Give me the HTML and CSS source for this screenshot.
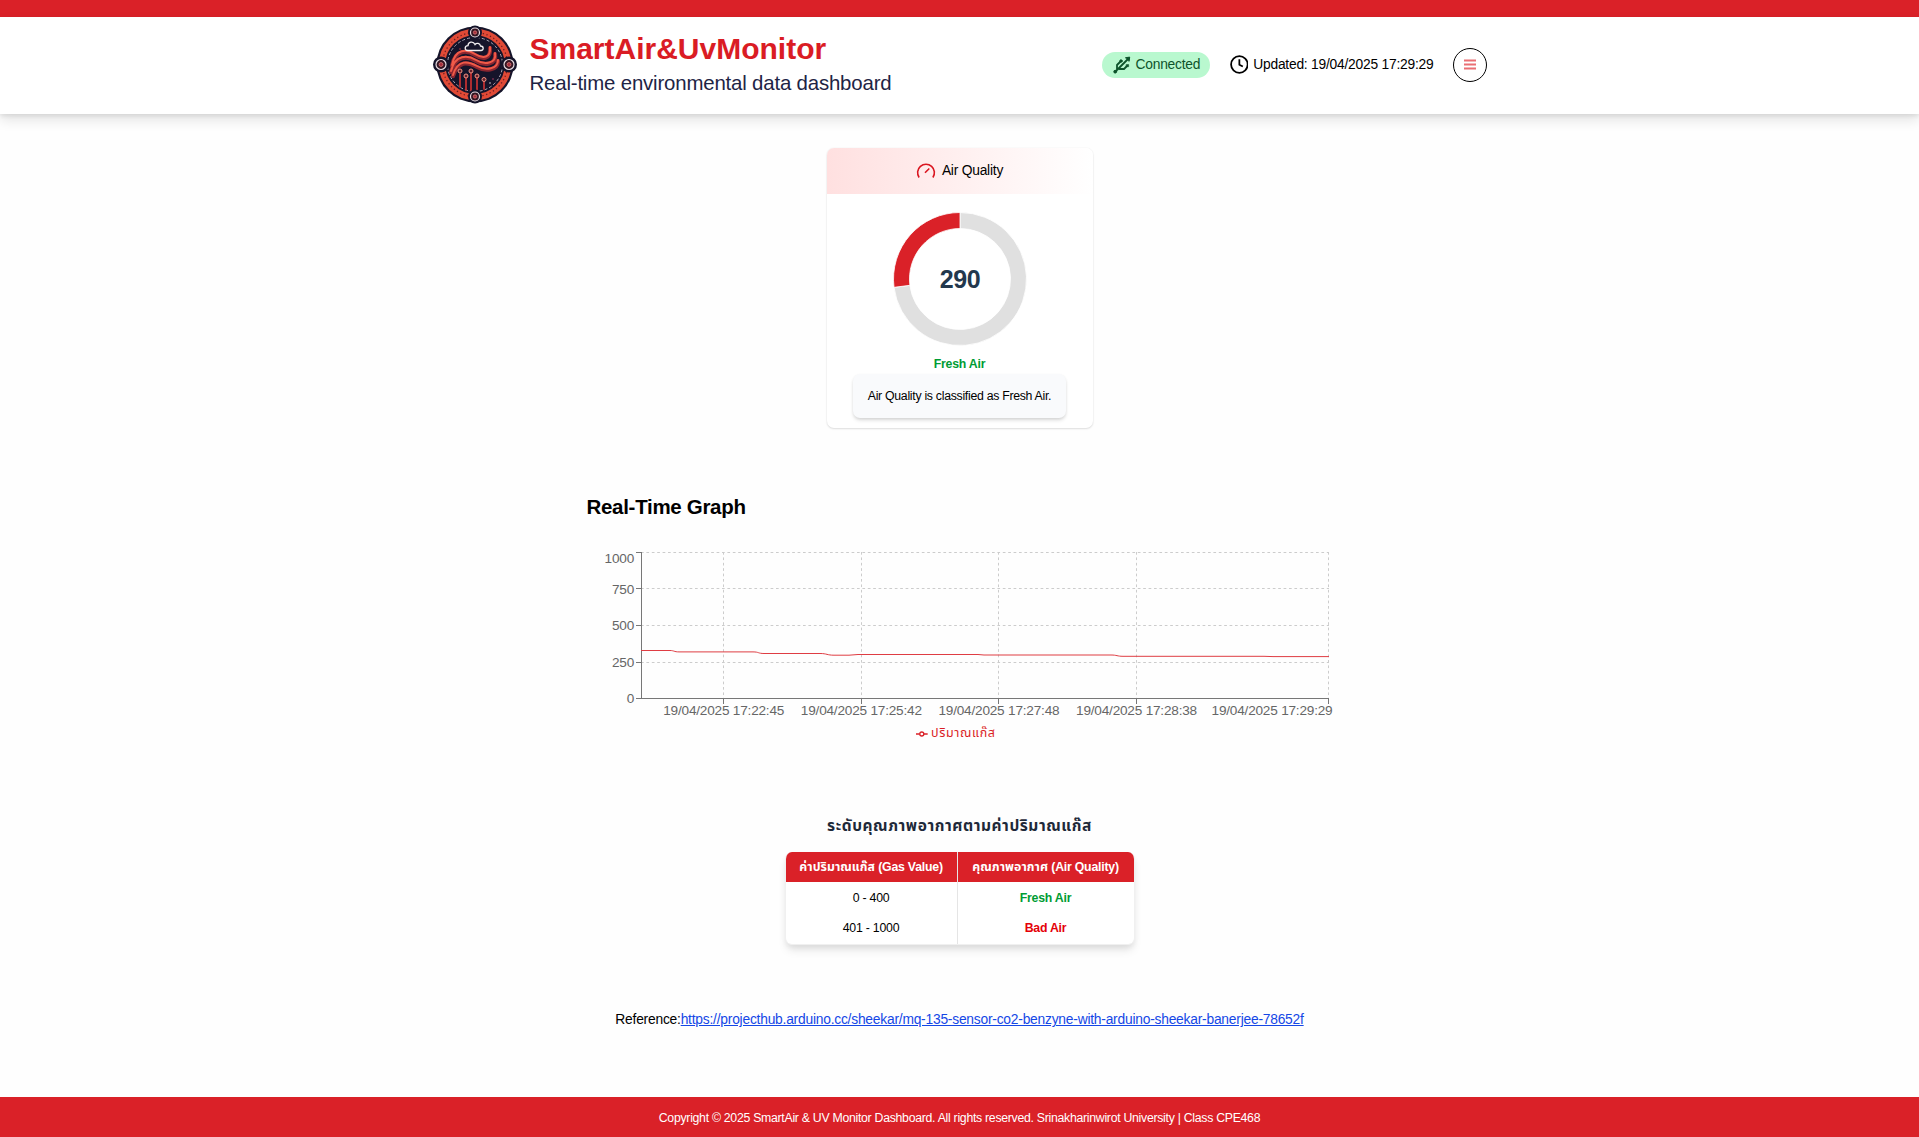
FILE: index.html
```html
<!DOCTYPE html>
<html lang="en">
<head>
<meta charset="utf-8">
<title>SmartAir&amp;UvMonitor</title>
<link rel="stylesheet" href="styles.css">
</head>
<body>
<div class="topbar"></div>
<header class="header">
  <div class="header-inner">
    <svg class="logo" width="84" height="80" viewBox="0 0 84 80">
      <ellipse cx="42" cy="39.500" rx="38.500" ry="38" fill="#15142a"/>
      <ellipse cx="42" cy="39.500" rx="33" ry="32.500" fill="none" stroke="#e04a36" stroke-width="6.400"/>
      <ellipse cx="42" cy="39.500" rx="32.500" ry="32" fill="none" stroke="#6d1d22" stroke-width="1.300" stroke-dasharray="1.300 2.500"/>
      <ellipse cx="42" cy="39.500" rx="27.500" ry="27" fill="#15142a" stroke="#a9a6b4" stroke-width="1" stroke-dasharray="3 2"/>
      <g fill="none" stroke-linecap="round">
        <path d="M19 41C22 24 34 25 42 30S58 34 57 23M18 47C22 30 35 31 43 36S64 40 62 29M20 51C25 35 35 37 44 42S65 45 65 36" stroke="#8c2630" stroke-width="4.200"/>
        <path d="M19 40C22 23 34 24 42 29S58 33 57 22M18 46C22 29 35 30 43 35S64 39 62 28M20 50C25 34 35 36 44 41S65 44 65 35" stroke="#f05a48" stroke-width="2"/>
        <path d="M27 49v13M33 53v12M38 48v18M44 53v13M51 57v7" stroke="#c83232" stroke-width="1.700"/>
      </g>
      <path d="M35 25.500h13c3 0 3-4.500-.5-4.500-.5-3-4-3.500-5.500-1.500-2-4-7-2.500-7 1.200-4 .3-3.500 4.800 0 4.800z" fill="#15142a" stroke="#f1eef0" stroke-width="1.300"/>
      <g fill="#611f2c" stroke="#f29483" stroke-width="1">
        <circle cx="27" cy="46" r="2"/><circle cx="33" cy="51" r="2"/><circle cx="38" cy="46" r="2"/><circle cx="44" cy="51" r="2"/><circle cx="51" cy="54.500" r="2"/>
      </g>
      <g fill="#15142a" stroke="#15142a" stroke-width="2">
        <circle cx="42" cy="7.500" r="6"/><circle cx="42" cy="71.500" r="6"/><circle cx="8" cy="39.500" r="7"/><circle cx="76" cy="39.500" r="7"/>
      </g>
      <g fill="#351421" stroke="#e5dde2" stroke-width="1.200">
        <circle cx="42" cy="7.500" r="4.500"/><circle cx="42" cy="71.500" r="4.500"/><circle cx="8" cy="39.500" r="5"/><circle cx="76" cy="39.500" r="5"/>
      </g>
      <g fill="#a52d3b" stroke="#f0908b" stroke-width=".6">
        <circle cx="42" cy="7.500" r="1.700"/><circle cx="42" cy="71.500" r="1.700"/><circle cx="8" cy="39.500" r="2"/><circle cx="76" cy="39.500" r="2"/>
      </g>
      <circle cx="60" cy="54" r=".8" fill="#b33b66"/><circle cx="57" cy="58" r=".7" fill="#fff"/><circle cx="27" cy="24" r=".8" fill="#b33b4a"/>
    </svg>
    <div class="brand">
      <h1>SmartAir&amp;UvMonitor</h1>
      <p>Real-time environmental data dashboard</p>
    </div>
    <div class="status">
      <span class="pill">
        <svg width="18" height="18" viewBox="0 0 18 18" fill="none" stroke="#0d542b" stroke-width="1.800" stroke-linecap="round" stroke-linejoin="round">
          <path d="M2 16 15.500 2.500M4 14V9L7.500 5.500M6.500 11.500v1.500h4.500l3-3"/>
          <path d="M12.800 1.700 16.700 1.100 16.200 5z" fill="#0d542b" stroke-width="1"/>
          <circle cx="2.200" cy="15.700" r="1.400" fill="#0d542b" stroke-width="1"/>
          <circle cx="8" cy="5" r="1.200" fill="#0d542b" stroke-width="1"/>
          <path d="M13.500 8.500h2.200v2.200h-2.200z" fill="#0d542b" stroke-width=".5"/>
        </svg>
        <span>Connected</span>
      </span>
      <span class="updated">
        <svg width="19" height="19" viewBox="0 0 19 19" fill="none" stroke="#000" stroke-width="1.800"><circle cx="9.500" cy="9.500" r="8.400"/><path d="M9.500 4.200v5.500l3.500 1.800"/></svg>
        <span>Updated: 19/04/2025 17:29:29</span>
      </span>
      <button class="menu" aria-label="Menu">
        <svg width="12" height="11" viewBox="0 0 12 11"><path d="M0 1.500h12M0 5.500h12M0 9.500h12" stroke="#ea6e73" stroke-width="2"/></svg>
      </button>
    </div>
  </div>
</header>

<main class="main">
  <section class="card">
    <div class="card-head">
      <svg width="20" height="18" viewBox="0 0 20 18" fill="none" stroke="#da1620" stroke-width="1.600"><path d="M3.100 15.500A8.400 8.400 0 1 1 16.900 15.500M9 10.700 13.300 6.500"/></svg>
      <span>Air Quality</span>
    </div>
    <svg class="ring" width="134" height="134" viewBox="-67 -67 134 134">
      <path d="M0-66.500A66.500 66.500 0 1 1-65.980 8.330L-50.100 6.330A50.500 50.500 0 1 0 0-50.500Z" fill="#e0e0e0" stroke="#fff" stroke-width=".8"/>
      <path d="M-65.980 8.330A66.500 66.500 0 0 1 0-66.500V-50.500A50.500 50.500 0 0 0-50.100 6.330Z" fill="#da2128" stroke="#fff" stroke-width=".8"/>
      <text class="ring-value" x="0" y="8.500" text-anchor="middle">290</text>
    </svg>
    <p class="quality fresh">Fresh Air</p>
    <p class="note">Air Quality is classified as Fresh Air.</p>
  </section>

  <section class="graph">
    <h2>Real-Time Graph</h2>
    <svg class="chart" width="746" height="204" viewBox="587 540 746 204">
      <g class="grid">
        <path d="M641 552.500H1329M641 588.500H1329M641 625.500H1329M641 662.500H1329M723.500 552V699M861.500 552V699M998.500 552V699M1136.500 552V699M1328.500 552V699"/>
      </g>
      <path class="axis" d="M641.500 552V699M641 698.500H1329M636 552.500H641M636 588.500H641M636 625.500H641M636 662.500H641M636 698.500H641M723.500 699V704M861.500 699V704M998.500 699V704M1136.500 699V704M1328.500 699V704"/>
      <path class="line" d="M641 650.500H670C674 650.500 674 651.900 679 651.900H753C759 651.900 758 653.500 764 653.500H820C827 653.500 827 655.200 834 655.200H849L858 654.500H978L984 655H1111C1117 655 1117 656.300 1123 656.300H1264L1273 656.600H1329"/>
      <g class="tick end">
        <text x="634" y="563">1000</text><text x="634" y="594">750</text><text x="634" y="630">500</text><text x="634" y="667">250</text><text x="634" y="703">0</text>
      </g>
      <g class="tick">
        <text x="723.700" y="715">19/04/2025 17:22:45</text><text x="861.300" y="715">19/04/2025 17:25:42</text><text x="998.900" y="715">19/04/2025 17:27:48</text><text x="1136.500" y="715">19/04/2025 17:28:38</text><text x="1272" y="715">19/04/2025 17:29:29</text>
      </g>
      <path class="key" d="M916 734H919.800M923.800 734H927.700"/><circle class="key" cx="921.800" cy="734" r="2"/>
      <text class="legend" x="931" y="737" textLength="64">ปริมาณแก๊ส</text>
    </svg>
  </section>

  <section class="levels">
    <h3>ระดับคุณภาพอากาศตามค่าปริมาณแก๊ส</h3>
    <div class="table">
      <div class="th"><span class="thai">ค่าปริมาณแก๊ส</span> (Gas Value)</div><div class="th"><span class="thai">คุณภาพอากาศ</span> (Air Quality)</div>
      <div class="td">0 - 400</div><div class="td fresh">Fresh Air</div>
      <div class="td">401 - 1000</div><div class="td bad">Bad Air</div>
    </div>
  </section>

  <p class="reference">Reference:<a href="#">https://projecthub.arduino.cc/sheekar/mq-135-sensor-co2-benzyne-with-arduino-sheekar-banerjee-78652f</a></p>
</main>
<footer class="footer">Copyright © 2025 SmartAir &amp; UV Monitor Dashboard. All rights reserved. Srinakharinwirot University | Class CPE468</footer>
</body>
</html>
```
FILE: styles.css
```css
* { box-sizing: border-box; }
body { margin: 0; min-height: 1137px; display: flex; flex-direction: column; background: #fefefe; color: #000; font: 13.800px/20px "Liberation Sans", "Noto Sans Thai", "Noto Sans", sans-serif; letter-spacing: -.22px; }
h1, h2, h3, p { margin: 0; }
.topbar { height: 17px; background: #da2128; }
.header { height: 97px; background: #fff; box-shadow: 0 6px 12px rgba(0,0,0,.11), 0 2px 4px rgba(0,0,0,.08); }
.header-inner { width: 1054px; height: 95px; margin: 0 auto; display: flex; align-items: center; }
.logo { width: 84px; height: 80px; flex: none; }
.brand { margin-left: 13px; height: 64px; letter-spacing: 0; }
.brand h1 { color: #da1c24; font-size: 30px; line-height: 32px; }
.brand p { padding-top: 2px; color: #1e2445; font-size: 20.400px; letter-spacing: -.17px; line-height: 32px; }
.status { margin-left: auto; display: flex; align-items: center; }
.pill { display: flex; align-items: center; gap: 5px; width: 108px; height: 26px; padding-left: 11px; border-radius: 13px; background: #b9f8cf; color: #0d542b; }
.updated { display: flex; align-items: center; gap: 5px; width: 204px; margin-left: 20px; white-space: nowrap; }
.menu { width: 34px; height: 34px; margin-left: 19px; padding: 0; display: grid; place-items: center; border: 1px solid #000; border-radius: 50%; background: #fff; }
.main { flex: 1; display: flex; flex-direction: column; align-items: center; }
.card { width: 266px; height: 280px; margin-top: 34px; display: flex; flex-direction: column; align-items: center; border-radius: 7px; overflow: hidden; background: #fff; box-shadow: 0 1px 2px rgba(0,0,0,.12), 0 0 2px rgba(0,0,0,.06); }
.card-head { width: 100%; height: 46px; display: flex; align-items: center; justify-content: center; gap: 6px; background: linear-gradient(90deg, #ffe0e0, #fff); }
.ring { margin-top: 18px; }
.ring-value { font-size: 25px; letter-spacing: -.4px; font-weight: 700; fill: #23384d; }
.quality { margin-top: 10px; font-size: 12.300px; line-height: 16px; font-weight: 700; }
.fresh { color: #009c34; font-weight: 700; }
.bad { color: #e50008; font-weight: 700; }
.note { width: 213px; height: 44px; margin-top: 2px; border-radius: 7px; background: #f9fafc; text-align: center; font-size: 12.300px; letter-spacing: -.29px; line-height: 45px; box-shadow: 0 3px 4px -1px rgba(0,0,0,.14), 0 1px 3px rgba(0,0,0,.07); }
.graph { width: 746px; margin-top: 66px; }
.graph h2 { font-size: 20.500px; letter-spacing: -.3px; line-height: 26px; }
.chart { display: block; margin-top: 20px; overflow: visible; }
.grid { fill: none; stroke: #ccc; stroke-dasharray: 2.700 2.700; }
.axis { fill: none; stroke: #777; }
.line { fill: none; stroke: #df3d43; stroke-width: 1; }
.tick { font-size: 13.600px; letter-spacing: -.2px; fill: #666; text-anchor: middle; }
.end { text-anchor: end; }
.key { fill: none; stroke: #da2128; stroke-width: 1.300; }
.legend { font-size: 12.500px; letter-spacing: 0; fill: #da1c24; }
.levels { width: 350px; margin-top: 72px; display: flex; flex-direction: column; align-items: center; }
.levels h3 { color: #1e2939; font-size: 15.500px; letter-spacing: .55px; line-height: 20px; white-space: nowrap; }
.table { width: 350px; margin-top: 16px; display: grid; grid-template-columns: 172px 176px; border: 1px solid #f0f0f0; border-top: 0; border-radius: 7px; overflow: hidden; background: #fff; text-align: center; font-size: 12.300px; box-shadow: 0 7px 10px -2px rgba(0,0,0,.1), 0 3px 5px rgba(0,0,0,.05); }
.th { height: 30px; line-height: 31px; background: #da2128; color: #fff; font-weight: 700; white-space: nowrap; }
.thai { letter-spacing: .05px; }
.th:nth-child(odd), .td:nth-child(odd) { border-right: 1px solid #e5e5e5; }
.td { height: 31px; line-height: 32px; }
.td:nth-last-child(-n+2) { line-height: 30px; }
.reference { margin-top: 65px; white-space: nowrap; }
.reference a { color: #1447e6; text-decoration: underline; }
.footer { height: 40px; background: #da2128; color: #fff; text-align: center; font-size: 12.300px; letter-spacing: -.29px; line-height: 42px; }
```
